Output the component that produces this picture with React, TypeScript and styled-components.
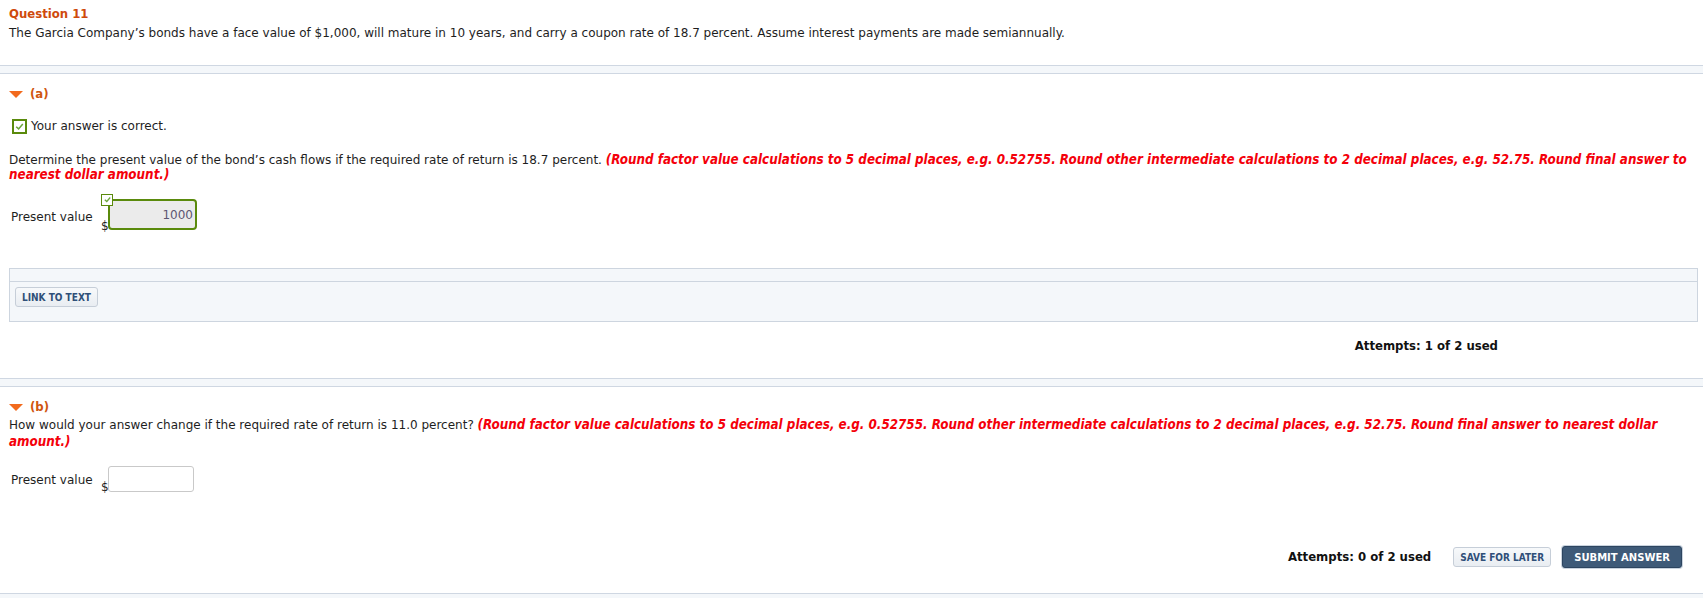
import styled, { createGlobalStyle } from 'styled-components'

const GlobalStyle = createGlobalStyle`
  html, body {
    margin: 0;
    padding: 0;
    background: #fff;
  }
  body {
    font-family: "DejaVu Sans", "Liberation Sans", sans-serif;
    font-size: 12px;
    color: #1e1e1e;
  }
`

const condensed = `
  font-family: "DejaVu Sans Condensed", "DejaVu Sans", sans-serif;
  font-stretch: condensed;
`

const Page = styled.div`
  display: flex;
  flex-direction: column;
  min-height: 598px;
`

const Header = styled.div`
  padding: 6px 8px 0 9px;
`

const Title = styled.div`
  ${condensed}
  font-weight: bold;
  font-size: 13px;
  line-height: 16px;
  color: #cf4a0c;
`

const Text = styled.div<{ $lh?: number; $mt?: number }>`
  line-height: ${(p) => p.$lh ?? 16}px;
  margin-top: ${(p) => p.$mt ?? 0}px;
`

const Hint = styled.span`
  ${condensed}
  color: #f4000a;
  font-weight: bold;
  font-style: italic;
  font-size: 13.3px;
  line-height: 1;
`

const Band = styled.div<{ $mt: number }>`
  margin-top: ${(p) => p.$mt}px;
  height: 7px;
  background: #f4f7fa;
  border-top: 1px solid #cfd7e2;
  border-bottom: 1px solid #cfd7e2;
`

const Part = styled.div`
  padding: 0 8px 0 9px;
  display: flex;
  flex-direction: column;
`

const PartTitle = styled.div<{ $mt: number }>`
  ${condensed}
  margin-top: ${(p) => p.$mt}px;
  display: flex;
  align-items: center;
  gap: 7px;
  font-weight: bold;
  font-size: 13px;
  line-height: 16px;
  color: #d0560f;
`

const Status = styled.div`
  margin-top: 17px;
  display: flex;
  align-items: center;
  gap: 4px;
  padding-left: 3px;
  line-height: 15px;
`

const CheckBox = styled.span<{ $size: number; $border: number }>`
  box-sizing: border-box;
  width: ${(p) => p.$size}px;
  height: ${(p) => p.$size}px;
  border: ${(p) => p.$border}px solid #5a8a0c;
  background: #fff;
  display: inline-flex;
  align-items: center;
  justify-content: center;
`

const AnswerRow = styled.div<{ $mt: number }>`
  margin-top: ${(p) => p.$mt}px;
  display: flex;
  align-items: flex-start;
  padding-left: 2px;
`

const Label = styled.div<{ $pt: number }>`
  padding-top: ${(p) => p.$pt}px;
  line-height: 15px;
  width: 90px;
`

const Dollar = styled.div<{ $mt: number }>`
  margin-top: ${(p) => p.$mt}px;
  width: 7px;
  line-height: 15px;
`

const Field = styled.div`
  position: relative;
`

const Input = styled.input<{ $correct?: boolean }>`
  box-sizing: border-box;
  font-family: inherit;
  font-size: 12px;
  text-align: right;
  outline: none;
  ${(p) =>
    p.$correct
      ? `
    width: 89px;
    height: 31px;
    border: 2px solid #5a8a0c;
    border-radius: 4px;
    background: #ebebeb;
    color: #5d5672;
    padding: 0 2px 0 5px;
  `
      : `
    width: 86px;
    height: 26px;
    border: 1px solid #c9c9c9;
    border-radius: 3px;
    background: #fff;
    padding: 0 4px;
  `}
`

const Badge = styled.span`
  position: absolute;
  left: -7px;
  top: -6px;
`

const Panel = styled.div`
  margin: 34px 5px 0 9px;
  border: 1px solid #cdd5df;
  background: #f4f7fa;
`

const PanelTop = styled.div`
  height: 12px;
  border-bottom: 1px solid #cdd5df;
`

const PanelBody = styled.div`
  padding: 5px 5px 14px;
`

const LightButton = styled.button`
  ${condensed}
  box-sizing: border-box;
  height: 20px;
  padding: 0 6px;
  font-weight: bold;
  font-size: 10px;
  color: #2f4f78;
  background: linear-gradient(#f7f9fb, #e9edf2);
  border: 1px solid #c6ced8;
  border-radius: 3px;
  cursor: pointer;
`

const DarkButton = styled.button`
  box-sizing: border-box;
  height: 22px;
  padding: 0 11px;
  font-family: "DejaVu Sans", sans-serif;
  font-weight: bold;
  font-size: 10px;
  color: #fff;
  background: #3e5a78;
  border: 1px solid #2d4560;
  border-radius: 3px;
  box-shadow: 0 0 0 1px #c9d3de;
  cursor: pointer;
`

const Footer = styled.div<{ $mt: number; $pr: number }>`
  margin-top: ${(p) => p.$mt}px;
  padding-right: ${(p) => p.$pr}px;
  display: flex;
  align-items: center;
  justify-content: flex-end;
  gap: 22px;
`

const Attempts = styled.div`
  ${condensed}
  font-weight: bold;
  font-size: 13px;
  line-height: 16px;
  color: #111;
`

const Buttons = styled.div`
  display: flex;
  align-items: center;
  gap: 11px;
`

const Bottom = styled.div`
  margin-top: 25px;
  flex: 1;
  border-top: 1px solid #cfd7e2;
  background: #f4f7fa;
`

const Caret = () => (
  <svg width="14" height="7" viewBox="0 0 14 7">
    <polygon points="0,0 14,0 7,7" fill="#f26a1d" />
  </svg>
)

const Tick = ({ size }: { size: number }) => (
  <svg width={size} height={size} viewBox="0 0 10 10">
    <polyline points="2,5.2 4.2,7.2 8,2.8" fill="none" stroke="#6aa53a" strokeWidth="1.4" />
  </svg>
)

const ROUND_HINT =
  '(Round factor value calculations to 5 decimal places, e.g. 0.52755. Round other intermediate calculations to 2 decimal places, e.g. 52.75. Round final answer to nearest dollar amount.)'

export default function App() {
  return (
    <Page>
      <GlobalStyle />
      <Header>
        <Title>Question 11</Title>
        <Text $mt={3}>
          The Garcia Company’s bonds have a face value of $1,000, will mature in 10 years, and carry a coupon rate of
          18.7 percent. Assume interest payments are made semiannually.
        </Text>
      </Header>

      <Band $mt={24} />

      <Part>
        <PartTitle $mt={12}>
          <Caret />
          (a)
        </PartTitle>
        <Status>
          <CheckBox $size={15} $border={2}>
            <Tick size={11} />
          </CheckBox>
          Your answer is correct.
        </Status>
        <Text $lh={15} $mt={19}>
          Determine the present value of the bond’s cash flows if the required rate of return is 18.7 percent.{' '}
          <Hint>{ROUND_HINT}</Hint>
        </Text>
        <AnswerRow $mt={16}>
          <Label $pt={11}>Present value</Label>
          <Dollar $mt={20}>$</Dollar>
          <Field>
            <Input $correct readOnly value="1000" />
            <Badge>
              <CheckBox $size={12} $border={1}>
                <Tick size={9} />
              </CheckBox>
            </Badge>
          </Field>
        </AnswerRow>
      </Part>

      <Panel>
        <PanelTop />
        <PanelBody>
          <LightButton>LINK TO TEXT</LightButton>
        </PanelBody>
      </Panel>

      <Footer $mt={16} $pr={205}>
        <Attempts>Attempts: 1 of 2 used</Attempts>
      </Footer>

      <Band $mt={24} />

      <Part>
        <PartTitle $mt={12}>
          <Caret />
          (b)
        </PartTitle>
        <Text $lh={17} $mt={2}>
          How would your answer change if the required rate of return is 11.0 percent? <Hint>{ROUND_HINT}</Hint>
        </Text>
        <AnswerRow $mt={15}>
          <Label $pt={7}>Present value</Label>
          <Dollar $mt={14}>$</Dollar>
          <Input />
        </AnswerRow>
      </Part>

      <Footer $mt={51} $pr={21}>
        <Attempts>Attempts: 0 of 2 used</Attempts>
        <Buttons>
          <LightButton>SAVE FOR LATER</LightButton>
          <DarkButton>SUBMIT ANSWER</DarkButton>
        </Buttons>
      </Footer>

      <Bottom />
    </Page>
  )
}
